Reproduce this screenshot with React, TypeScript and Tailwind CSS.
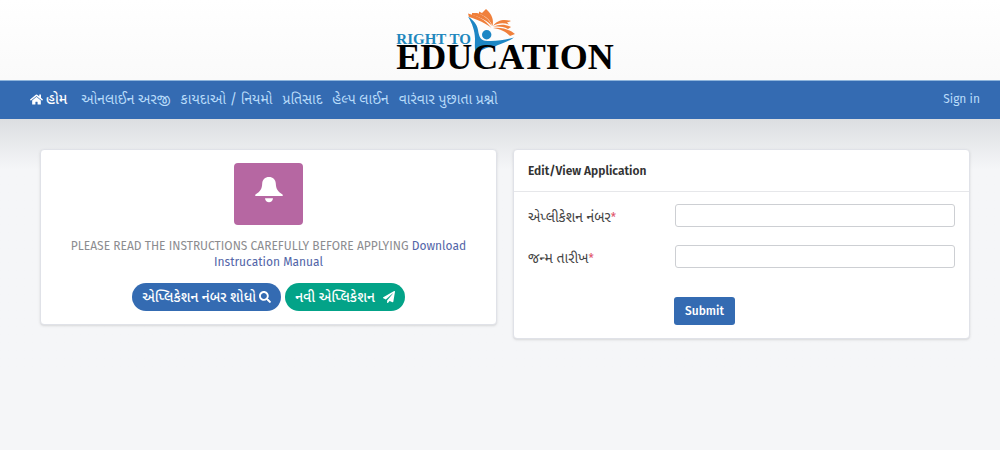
import React from "react";
import { FaHome, FaPaperPlane, FaSearch } from "react-icons/fa";

const navLinks = [
  "ઓનલાઈન અરજી",
  "કાયદાઓ / નિયમો",
  "પ્રતિસાદ",
  "હેલ્પ લાઈન",
  "વારંવાર પુછાતા પ્રશ્નો",
];

function Figure() {
  return (
    <svg
      viewBox="0 0 48 48"
      className="absolute left-[72px] top-0 size-12"
      aria-hidden="true"
    >
      <path
        d="M0 8.5C5 12 9 16 10 22C11 28 12 32 17 32.8C28 33.5 38 32 46 29.5C39 34.5 31 36 26 39C18 39 12 42 9 47C6 43 7 37 7 31C7 23 4 15 0 8.5Z"
        fill="#1d86c4"
      />
      <circle cx="18.7" cy="26.7" r="4.7" fill="#1d86c4" />
      <g fill="#f0803c">
        <path d="M0 5.5C9 8 17 11 23.5 20C18 15.5 10 11.5 1 9Z" />
        <path d="M4 5L9 5C16 7 21 11 24 18C19 12.5 13 9.5 4 7Z" />
        <path d="M11 3.5L14 5L18 1C24 6 26 12 24.5 18C22 12 18 8 11 6Z" />
        <path d="M25 18C29 12 36 11 43 13L39 14.5L41 16.5C35 14.5 30 15 25 18Z" />
        <path d="M25 19C31 16 37 16 43 19L40 21C35 18.5 30 18 25 19Z" />
        <path d="M25 20C33 19 41 21 47 26L42 28C38 23.5 32 21 25 20Z" />
      </g>
    </svg>
  );
}

function BellIcon() {
  return (
    <svg viewBox="0 0 28 26" className="h-[26px] w-7" fill="currentColor" aria-hidden="true">
      <path d="M14 0C18 0 20.5 2.5 20.8 6.5C21 11.5 22.5 14.5 27.5 17.5C28.3 18.3 28 19 27 19H1C0 19 -.3 18.3 .5 17.5C5.5 14.5 7 11.5 7.2 6.5C7.5 2.5 10 0 14 0Z" />
      <path d="M10 21.3H18C17.8 24 16 25.3 14 25.3S10.2 24 10 21.3Z" />
    </svg>
  );
}

function Logo() {
  return (
    <a
      href="#"
      className="relative flex flex-col font-['Liberation_Serif',serif] font-bold whitespace-nowrap"
    >
      <Figure />
      <span className="mt-[23px] text-[15px] leading-4 text-[#2187bd]">RIGHT TO</span>
      <span className="relative text-[36px] leading-5 text-black">EDUCATION</span>
    </a>
  );
}

function Field({ id, label }: { id: string; label: string }) {
  return (
    <div className="grid grid-cols-[147px_1fr] items-start">
      <label htmlFor={id} className="pt-[5px] text-[14px] leading-[18px] text-[#444]">
        {label}
        <span className="text-[12px] text-[#e0526a]">*</span>
      </label>
      <input
        id={id}
        type="text"
        className="h-[23px] w-full rounded-[3px] border border-[#cdcfd3] bg-white px-2 outline-none"
      />
    </div>
  );
}

export default function App() {
  return (
    <div className="min-h-screen bg-[#f5f6f8] font-['Fira_Sans','Noto_Sans','Noto_Sans_Gujarati',sans-serif] text-[12px]">
      <header className="flex h-20 justify-center bg-linear-to-b from-white to-[#fafafa] pl-2.5 pt-2">
        <Logo />
      </header>
      <nav className="flex h-[39px] items-center justify-between border-t border-[#8fb5dc] bg-[#346bb2] pb-0.5 pl-[30px] pr-5 text-[#b9dcfa]">
        <div className="flex items-center gap-2.5 whitespace-nowrap text-[14px]">
          <a href="#" className="mr-1 flex items-center gap-[3px] font-medium text-white">
            <FaHome className="size-[13px]" />
            હોમ
          </a>
          {navLinks.map((link) => (
            <a key={link} href="#">
              {link}
            </a>
          ))}
        </div>
        <a href="#">Sign in</a>
      </nav>

      <main className="grid grid-cols-2 items-start gap-4 bg-linear-to-b from-[#dcdee1] to-[#f5f6f8] to-[50px] pb-8 pl-10 pr-[30px] pt-[30px]">
        <section className="flex flex-col items-center rounded border border-[#e0e2e8] bg-white px-6 py-[13px] text-center shadow-sm">
          <div className="flex h-[62px] w-[69px] items-center justify-center rounded bg-[#b667a2] pb-2 text-white">
            <BellIcon />
          </div>
          <p className="mt-[13px] leading-4 text-[#8c8c8f]">
            PLEASE READ THE INSTRUCTIONS CAREFULLY BEFORE APPLYING{" "}
            <a href="#" className="text-[#5265a8]">
              Download Instrucation Manual
            </a>
          </p>
          <div className="mt-[13px] flex gap-1 whitespace-nowrap text-[14px] font-medium text-white">
            <button
              type="button"
              className="flex h-7 items-center gap-[3px] rounded-full bg-[#346bb2] px-[10px]"
            >
              એપ્લિકેશન નંબર શોધો
              <FaSearch className="size-3" />
            </button>
            <button
              type="button"
              className="flex h-7 items-center gap-2 rounded-full bg-[#03a388] px-[10px]"
            >
              નવી એપ્લિકેશન
              <FaPaperPlane className="size-3" />
            </button>
          </div>
        </section>

        <section className="rounded border border-[#e0e2e8] bg-white shadow-sm">
          <h2 className="border-b border-[#e6e7ea] px-3.5 pb-3 pt-[13px] leading-4 font-semibold text-[#333]">
            Edit/View Application
          </h2>
          <form className="flex flex-col gap-[18px] px-3.5 pb-[13px] pt-3">
            <Field id="application-number" label="એપ્લીકેશન નંબર" />
            <Field id="birth-date" label="જન્મ તારીખ" />
            <button
              type="submit"
              className="ml-[146px] mt-[11px] h-7 self-start rounded-[3px] bg-[#346bb2] px-[11px] font-medium text-white"
            >
              Submit
            </button>
          </form>
        </section>
      </main>
    </div>
  );
}
